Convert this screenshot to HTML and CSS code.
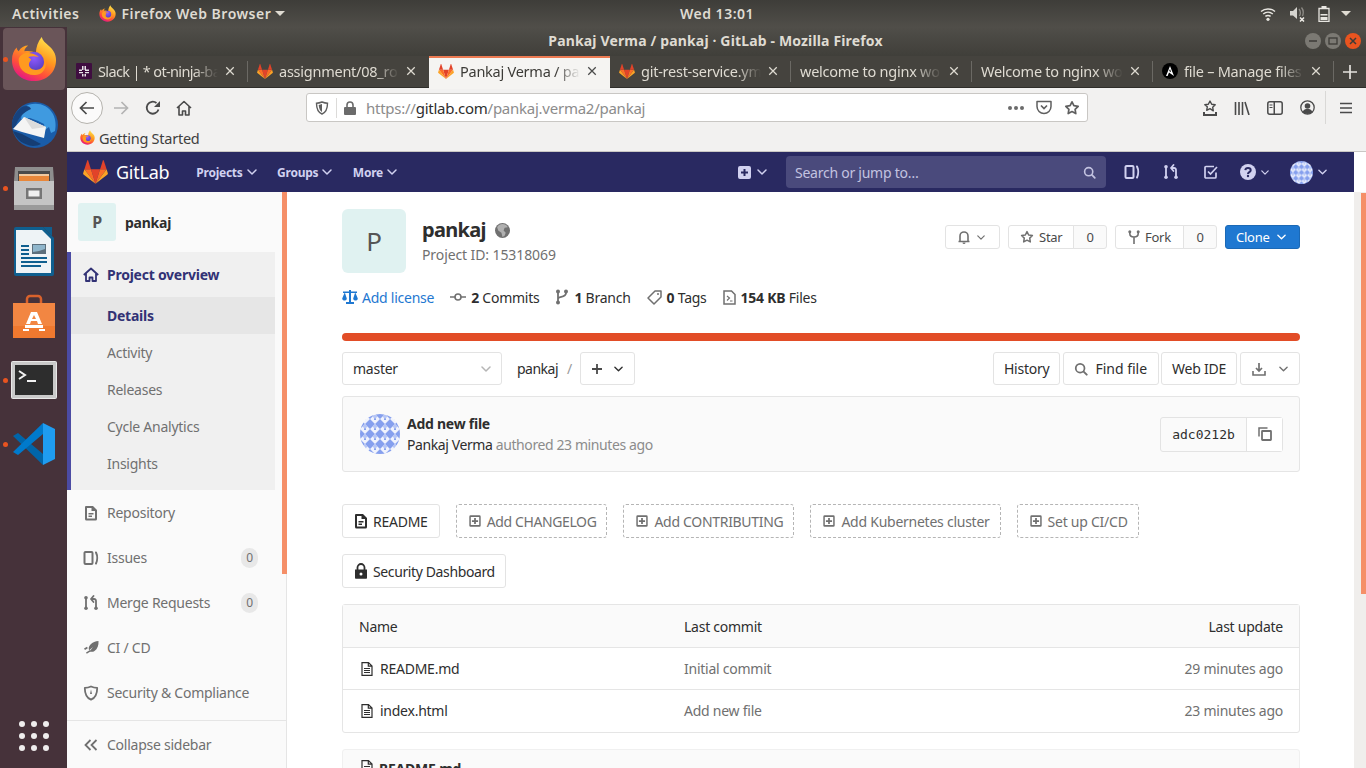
FILE: index.html
```html
<!DOCTYPE html>
<html lang="en">
<head>
  <meta charset="utf-8">
  <title>Pankaj Verma / pankaj - GitLab</title>
  <link rel="stylesheet" href="styles.css">
</head>
<body>

<!-- shared icons -->
<svg class="defs" width="0" height="0" aria-hidden="true">
  <defs>
    <symbol id="tanuki" viewBox="0 0 36 34">
      <path fill="#e24329" d="M18 34 24.6 13 11.4 13Z"/>
      <path fill="#fc6d26" d="M18 34 11.4 13 2 13Z"/>
      <path fill="#fca326" d="M2 13 .2 18.900c-.2.600 0 1.200.5 1.600L18 34Z"/>
      <path fill="#e24329" d="M2 13H11.400L7.400.6c-.2-.6-1.100-.6-1.300 0Z"/>
      <path fill="#fc6d26" d="M18 34 24.600 13 34 13Z"/>
      <path fill="#fca326" d="M34 13 35.800 18.900c.2.600 0 1.200-.5 1.600L18 34Z"/>
      <path fill="#e24329" d="M34 13H24.600L28.600.6c.2-.6 1.100-.6 1.300 0Z"/>
    </symbol>
    <linearGradient id="fxBody" x1="0.8" y1="0.05" x2="0.3" y2="1">
      <stop offset="0" stop-color="#ffe14d"/>
      <stop offset="0.4" stop-color="#ff9a1f"/>
      <stop offset="0.72" stop-color="#ff4f3a"/>
      <stop offset="1" stop-color="#e31587"/>
    </linearGradient>
    <radialGradient id="fxGlobe" cx="0.5" cy="0.3" r="0.8">
      <stop offset="0" stop-color="#9059ff"/>
      <stop offset="1" stop-color="#4b3bb5"/>
    </radialGradient>
    <symbol id="firefox" viewBox="0 0 48 48">
      <path fill="url(#fxBody)" d="M32 1c1 4 4 6 7 9 5 4 8 9 8 15 0 13-10 22-23 22C11 47 1 38 1 25c0-6 2-10 5-13 0 2 1 3 2 4 2-4 6-6 10-6-3 2-4 4-4 6 4-1 9 0 12 2 0-6 2-12 6-17Z"/>
      <circle cx="24" cy="27" r="10.500" fill="url(#fxGlobe)"/>
      <path fill="#ff9a1f" d="M8 24c2-5 7-7 12-6 4 .5 7 2 9 4-4-1-8-1-11 0 1 1 3 2 3 3-3 3-3 6 0 9 3 2 7 2 10 0 3-2 5-6 4-10 3 5 1 12-4 15-6 3-14 2-19-3-3-3-4-7-4-12Z"/>
    </symbol>
    <symbol id="chev" viewBox="0 0 10 6">
      <path fill="none" stroke="currentColor" stroke-width="1.500" stroke-linecap="round" stroke-linejoin="round" d="M1 1l4 4 4-4"/>
    </symbol>
    <symbol id="i-close" viewBox="0 0 12 12">
      <path fill="none" stroke="currentColor" stroke-width="1.500" d="M1.500 1.500l9 9M10.500 1.500l-9 9"/>
    </symbol>
    <symbol id="i-doc" viewBox="0 0 16 16">
      <path fill="currentColor" fill-rule="evenodd" d="M3 1h7l4 4v9a1.500 1.500 0 0 1-1.500 1.500h-9A1.500 1.500 0 0 1 2 14V2a1 1 0 0 1 1-1Zm1 2v10.500h8V6H8.500V3ZM5.500 8h5v1.500h-5Zm0 2.500h3.500V12H5.500Z"/>
    </symbol>
    <symbol id="i-file" viewBox="0 0 16 16">
      <path fill="none" stroke="currentColor" stroke-width="1.200" d="M3 1.600h6.500L13 5v9.400H3ZM9.300 1.800V5.200H13"/>
      <path fill="none" stroke="currentColor" stroke-width="1.100" d="M5 7.500h6M5 9.500h6M5 11.500h6"/>
    </symbol>
    <symbol id="i-issues" viewBox="0 0 16 16">
      <path fill="none" stroke="currentColor" stroke-width="2" d="M2.500 2h6a1 1 0 0 1 1 1v10a1 1 0 0 1-1 1h-6a1 1 0 0 1-1-1V3a1 1 0 0 1 1-1Z"/>
      <path fill="none" stroke="currentColor" stroke-width="2" stroke-linecap="round" d="M13 2.500c1.500 3 1.500 8 0 11"/>
    </symbol>
    <symbol id="i-mr" viewBox="0 0 16 16">
      <g fill="none" stroke="currentColor" stroke-width="1.800" stroke-linecap="round" stroke-linejoin="round">
        <path d="M3 4v8M13 13V6c0-1-.5-2-2-2H9"/><path d="M10.500 1 8 4l2.500 3"/>
      </g>
      <circle cx="3" cy="2.700" r="1.800" fill="currentColor"/><circle cx="3" cy="13.300" r="1.800" fill="currentColor"/><circle cx="13" cy="13.300" r="1.800" fill="currentColor"/>
    </symbol>
    <symbol id="i-plus-box" viewBox="0 0 16 16">
      <path fill="currentColor" fill-rule="evenodd" d="M3 1.500h10A1.500 1.500 0 0 1 14.500 3v10a1.500 1.500 0 0 1-1.500 1.500H3A1.500 1.500 0 0 1 1.500 13V3A1.500 1.500 0 0 1 3 1.500Zm.2 1.800v9.400h9.600V3.300ZM7 4.500h2V7h2.500v2H9v2.500H7V9H4.500V7H7Z"/>
    </symbol>
    <symbol id="i-search" viewBox="0 0 16 16">
      <circle cx="7" cy="7" r="5" fill="none" stroke="currentColor" stroke-width="2"/>
      <path stroke="currentColor" stroke-width="2.200" stroke-linecap="round" d="M11 11l3.500 3.500"/>
    </symbol>
    <symbol id="i-star" viewBox="0 0 16 16">
      <path fill="none" stroke="currentColor" stroke-width="1.700" stroke-linejoin="round" d="M8 1.800l1.900 3.900 4.300.6-3.100 3 .7 4.300L8 11.600l-3.800 2 .7-4.300-3.100-3 4.300-.6Z"/>
    </symbol>
    <symbol id="identicon" viewBox="0 0 40 40">
      <defs>
        <pattern id="triPat" width="10" height="10" patternUnits="userSpaceOnUse">
          <rect width="10" height="10" fill="#f0f3fd"/>
          <path fill="#86a0ee" d="M0 0h5L0 5ZM10 0v5L5 0ZM5 10l5-5v5ZM0 10V5l5 5ZM4 4h2v2H4Z"/>
          <path fill="#b6c6f5" d="M5 0l2.500 2.500L5 5 2.500 2.500Z"/>
        </pattern>
      </defs>
      <circle cx="20" cy="20" r="20" fill="url(#triPat)"/>
    </symbol>
  </defs>
</svg>

<header class="topbar">
  <div class="topbar-left">
    <span class="activities">Activities</span>
    <span class="app-menu">
      <svg width="17" height="17"><use href="#firefox"/></svg>
      Firefox Web Browser
      <i class="caret"></i>
    </span>
  </div>
  <div class="clock">Wed 13:01</div>
  <div class="topbar-right">
    <svg width="16" height="14" viewBox="0 0 16 14"><g fill="none" stroke="#e8e6e1" stroke-width="1.500"><path d="M1 4.500c4-3.500 10-3.500 14 0"/><path d="M3.200 7c2.800-2.300 6.800-2.300 9.600 0"/><path d="M5.400 9.400c1.500-1.100 3.700-1.100 5.200 0" /></g><circle cx="8" cy="12.300" r="1.600" fill="#e8e6e1"/></svg>
    <svg width="16" height="16" viewBox="0 0 16 16"><path fill="#d5d3ce" d="M1 5h3l4-4v12L4 9.500H1Z"/><path fill="none" stroke="#8d8b86" stroke-width="1.300" d="M10 3c1.500 1.800 1.500 5 .5 7M12.500 1.500c2 2.500 2 6 1 8.500"/><path stroke="#f0eee9" stroke-width="1.500" d="M11 11.500l4 4M15 11.500l-4 4"/></svg>
    <svg width="12" height="16" viewBox="0 0 12 16"><path fill="none" stroke="#e8e6e1" stroke-width="1.300" d="M1 2.500h10v13H1Z"/><path fill="#e8e6e1" d="M3.500 0h5v2h-5ZM2.500 8h7v1.500h-7Zm0 3h7v3h-7Z"/></svg>
    <i class="caret"></i>
  </div>
</header>

<div class="workspace">
  <aside class="dock">
    <div class="dock-item is-active has-dot">
      <svg width="46" height="46"><use href="#firefox"/></svg>
    </div>
    <div class="dock-item">
      <svg width="48" height="48" viewBox="0 0 48 48">
        <circle cx="25" cy="25" r="23" fill="#1a5ca8"/>
        <path fill="#3f9ae0" d="M13 8c8-7 24-6 30 6 3 6 3 12 2 17l-4 2-2-6-4 3-1-6-6-3-8-3-9 1Z"/>
        <path fill="#17427d" d="M2 28c-1-8 3-16 10-21 4-2 8-1 9 2-7 3-13 8-16 19Z"/>
        <path fill="#f4f4f4" d="M3 29 14 17l22 10-2 11-22-6Z"/>
        <path fill="#dcdcdc" d="M14 17l22 10-14 2Z"/>
        <path fill="#153d73" d="M3 31c3 8 10 14 20 15 3 0 6-1 8-2l-19-10Z"/>
      </svg>
    </div>
    <div class="dock-item has-dot">
      <svg width="42" height="44" viewBox="0 0 42 44">
        <path fill="#8e8e8e" d="M2 1h38l1 14H1Z"/>
        <path fill="#4a4a4a" d="M5 5h32v11H5Z"/>
        <path fill="#f0c9a0" d="M6 8h30v2H6Z"/>
        <path fill="#e8873a" d="M6 10h30v6H6Z"/>
        <path fill="#c4c4c4" d="M1 15h40v29H1Z"/>
        <path fill="#9a9a9a" d="M1 39h40v5H1Z"/>
        <path fill="#767676" d="M13 22h16v11H13Z"/>
        <path fill="#f0f0f0" d="M15.500 24.500h11v6h-11Z"/>
      </svg>
    </div>
    <div class="dock-item">
      <svg width="42" height="50" viewBox="0 0 42 50">
        <path fill="#0f5f8f" d="M1 2a2 2 0 0 1 2-2h27l11 11v36a2 2 0 0 1-2 2H3a2 2 0 0 1-2-2Z"/>
        <path fill="#eef3f6" d="M3 3h26l9 9v34H3Z"/>
        <path fill="#0f5f8f" d="M30 0h9v9ZM8 18h8v2H8Zm0 4h8v2H8Zm0 4h8v2H8Zm0 4h26v2H8Zm0 4h26v2H8Zm0 4h20v2H8Z"/>
        <path fill="#5c6f7c" d="M19 17h14v10H19Z"/>
        <path fill="#8fb6cc" d="M20 18h12v4l-6 2-6 1Z"/>
      </svg>
    </div>
    <div class="dock-item">
      <svg width="42" height="44" viewBox="0 0 42 44">
        <path fill="none" stroke="#d9622c" stroke-width="2.500" d="M14 10V5a3 3 0 0 1 3-3h8a3 3 0 0 1 3 3v5"/>
        <path fill="#f0792f" d="M0 9h42v35H0Z"/>
        <path fill="#f7a066" d="M0 9h42v23H0Z" opacity=".35"/>
        <path fill="#fff" fill-rule="evenodd" d="M18 18h6l5 12h-4l-1-3h-6l-1 3h-4Zm3 3-2 4h4Z"/>
        <path fill="#fff" d="M12 31h18v3H12Z"/>
        <path fill="#fff" d="M10 35h6v2h-6Zm16 0h6v2h-6Z"/>
      </svg>
    </div>
    <div class="dock-item has-dot">
      <svg width="46" height="38" viewBox="0 0 46 38">
        <rect x=".5" y=".5" width="45" height="37" rx="1" fill="#c9c9c9" stroke="#e8e8e8"/>
        <rect x="4" y="4" width="38" height="30" fill="#2d2d2d"/>
        <path fill="none" stroke="#f2f2f2" stroke-width="2" d="M8 10l6 4-6 4"/>
        <path fill="#f2f2f2" d="M16 19h9v2h-9Z"/>
      </svg>
    </div>
    <div class="dock-item has-dot">
      <svg width="44" height="44" viewBox="0 0 44 44">
        <path fill="#0065a9" d="M31 43V32L6 11 1 14Z"/>
        <path fill="#007acc" d="M31 1V12L6 33 1 30Z"/>
        <path fill="#1f9cf0" d="M31 1l12 6v30l-12 6Z"/>
      </svg>
    </div>
    <div class="dock-grid"><i></i><i></i><i></i><i></i><i></i><i></i><i></i><i></i><i></i></div>
  </aside>

  <div class="window">
    <div class="titlebar">
      <span class="title-text">Pankaj Verma / pankaj · GitLab - Mozilla Firefox</span>
      <div class="win-buttons">
        <span class="win-btn"><svg width="16" height="16" viewBox="0 0 16 16"><path stroke="#3c3b37" stroke-width="1.500" d="M4 8h8"/></svg></span>
        <span class="win-btn"><svg width="16" height="16" viewBox="0 0 16 16"><rect x="4" y="5" width="8" height="6" fill="none" stroke="#3c3b37" stroke-width="1.300"/></svg></span>
        <span class="win-btn win-close"><svg width="16" height="16" viewBox="0 0 16 16"><path stroke="#3c3b37" stroke-width="1.500" d="M5 5l6 6M11 5l-6 6"/></svg></span>
      </div>
    </div>

    <div class="tabstrip">
      <div class="tab tab-tight">
        <svg width="16" height="16" viewBox="0 0 16 16"><rect width="16" height="16" rx="1" fill="#3f0e40"/><path fill="#e8e4e8" d="M6 3h1.500v4H6Zm2.500 0H10v4H8.500ZM3 6.500h3V8H3ZM3 9h4v1.300H3Zm6-2.500h4V8H9ZM9 9h4v1.300H9Zm-3 2h1.500v2.500H6Zm2.500 0H10v2.500H8.500Z"/></svg>
        <span class="tab-label">Slack | * ot-ninja-ba</span>
        <svg class="tab-x" width="10" height="10"><use href="#i-close"/></svg>
      </div>
      <div class="tab tab-nosep">
        <svg width="16" height="15"><use href="#tanuki"/></svg>
        <span class="tab-label">assignment/08_ro</span>
        <svg class="tab-x" width="10" height="10"><use href="#i-close"/></svg>
      </div>
      <div class="tab tab-active tab-nosep">
        <svg width="16" height="15"><use href="#tanuki"/></svg>
        <span class="tab-label">Pankaj Verma / pa</span>
        <svg class="tab-x" width="10" height="10"><use href="#i-close"/></svg>
      </div>
      <div class="tab">
        <svg width="16" height="15"><use href="#tanuki"/></svg>
        <span class="tab-label">git-rest-service.ym</span>
        <svg class="tab-x" width="10" height="10"><use href="#i-close"/></svg>
      </div>
      <div class="tab">
        <span class="tab-label">welcome to nginx wo</span>
        <svg class="tab-x" width="10" height="10"><use href="#i-close"/></svg>
      </div>
      <div class="tab">
        <span class="tab-label">Welcome to nginx wo</span>
        <svg class="tab-x" width="10" height="10"><use href="#i-close"/></svg>
      </div>
      <div class="tab">
        <svg width="16" height="16" viewBox="0 0 16 16"><circle cx="8" cy="8" r="8" fill="#000"/><path fill="#fff" d="M8 3l4 10-5-3.500L5.600 13H4Zm0 3L7.200 8l1.900 1.300Z"/></svg>
        <span class="tab-label">file – Manage files</span>
        <svg class="tab-x" width="10" height="10"><use href="#i-close"/></svg>
      </div>
      <svg class="tab-new" width="14" height="14" viewBox="0 0 14 14"><path stroke="#e4e2dd" stroke-width="1.700" d="M7 0v14M0 7h14"/></svg>
    </div>

    <div class="toolbar">
      <span class="back-btn"><svg width="16" height="14" viewBox="0 0 16 14"><path fill="none" stroke="#4a4a4a" stroke-width="1.700" d="M15 7H2M7.500 1 1.500 7l6 6"/></svg></span>
      <svg class="tool-fwd" width="16" height="14" viewBox="0 0 16 14"><path fill="none" stroke="#b3b3b3" stroke-width="1.700" d="M1 7h13M8.500 1l6 6-6 6"/></svg>
      <svg class="tool-reload" width="16" height="16" viewBox="0 0 16 16"><path fill="none" stroke="#4a4a4a" stroke-width="1.800" d="M13.500 9.500A6 6 0 1 1 11.500 3"/><path fill="#4a4a4a" d="M15 1v6H9Z"/></svg>
      <svg class="tool-home" width="16" height="16" viewBox="0 0 16 16"><path fill="none" stroke="#4a4a4a" stroke-width="1.600" stroke-linejoin="round" d="M1 8l7-6.500L15 8M3 6.500V15h3.500v-4h3v4H13V6.500"/></svg>

      <div class="urlbar">
        <svg width="14" height="14" viewBox="0 0 14 14"><path fill="none" stroke="#5f5f5f" stroke-width="1.400" d="M7 1c2 .8 3.800 1.200 5.500 1.200C12.500 8 10.500 11.500 7 13 3.500 11.500 1.500 8 1.500 2.200 3.200 2.200 5 1.800 7 1Z"/><path fill="#5f5f5f" d="M7 3v8c-2-1-3-3.500-3.300-7Z"/></svg>
        <i class="url-sep"></i>
        <svg width="12" height="14" viewBox="0 0 12 14"><path fill="none" stroke="#6b6b6b" stroke-width="1.600" d="M3 6.500V4a3 3 0 0 1 6 0v2.500"/><rect y="6" width="12" height="8" rx="1" fill="#6b6b6b"/></svg>
        <span class="url-text"><span class="url-dim">https://</span>gitlab.com<span class="url-dim">/pankaj.verma2/pankaj</span></span>
        <span class="url-dots"><i></i><i></i><i></i></span>
        <svg width="16" height="15" viewBox="0 0 16 15"><path fill="none" stroke="#5f5f5f" stroke-width="1.500" stroke-linejoin="round" d="M1 1.500h14v5a7 7 0 0 1-14 0Z"/><path fill="none" stroke="#5f5f5f" stroke-width="1.700" d="M5 5.500l3 3 3-3"/></svg>
        <svg class="url-star" width="16" height="16"><use href="#i-star"/></svg>
      </div>

      <div class="tool-right">
        <svg width="14" height="16" viewBox="0 0 14 16"><path fill="none" stroke="#4a4a4a" stroke-width="1.400" stroke-linejoin="round" d="M7 1l1.700 3.300 3.500.5-2.500 2.500.6 3.500L7 8.700l-3.300 1.600.6-3.500L1.800 4.800l3.500-.5Z"/><path fill="#4a4a4a" d="M0 12h2v2h10v-2h2v4H0Z"/></svg>
        <svg width="16" height="14" viewBox="0 0 16 14"><path stroke="#4a4a4a" stroke-width="1.600" fill="none" d="M1.500 1v13M5 1v13M8.500 1v13M11 1l4 13"/></svg>
        <svg width="16" height="14" viewBox="0 0 16 14"><rect x=".8" y=".8" width="14.400" height="12.400" rx="2" fill="none" stroke="#4a4a4a" stroke-width="1.500"/><path fill="#4a4a4a" d="M6.500 1h1.500v12H6.500ZM2.500 3.500h3v1h-3Zm0 2.500h3v1h-3Z"/></svg>
        <svg width="15" height="15" viewBox="0 0 15 15"><circle cx="7.500" cy="7.500" r="6.700" fill="none" stroke="#4a4a4a" stroke-width="1.300"/><circle cx="7.500" cy="6" r="2.800" fill="#4a4a4a"/><path fill="#4a4a4a" d="M2.500 12c1-2.500 3-3 5-3s4 .5 5 3c-3 2.500-7 2.500-10 0Z"/></svg>
        <i class="tool-sep"></i>
        <svg width="12" height="12" viewBox="0 0 12 12"><path stroke="#4a4a4a" stroke-width="1.700" d="M0 1.500h12M0 6h12M0 10.500h12"/></svg>
      </div>
    </div>

    <div class="bookmarks">
      <svg width="15" height="15"><use href="#firefox"/></svg>
      <span>Getting Started</span>
    </div>

    <div class="browser-view">
      <div class="page">
        <nav class="gl-nav">
          <svg class="gl-logo" width="25" height="24"><use href="#tanuki"/></svg>
          <span class="gl-brand">GitLab</span>
          <span class="gl-link gl-first">Projects <svg width="10" height="6"><use href="#chev"/></svg></span>
          <span class="gl-link">Groups <svg width="10" height="6"><use href="#chev"/></svg></span>
          <span class="gl-link">More <svg width="10" height="6"><use href="#chev"/></svg></span>
          <span class="gl-plus">
            <svg width="13" height="13" viewBox="0 0 13 13"><path fill="#d1d1f0" fill-rule="evenodd" d="M2 0h9a2 2 0 0 1 2 2v9a2 2 0 0 1-2 2H2a2 2 0 0 1-2-2V2a2 2 0 0 1 2-2Zm3.500 3v2.500H3v2h2.500V10h2V7.500H10v-2H7.500V3Z"/></svg>
            <svg width="10" height="6"><use href="#chev"/></svg>
          </span>
          <div class="gl-search">
            <span>Search or jump to…</span>
            <svg width="13" height="13"><use href="#i-search"/></svg>
          </div>
          <svg class="gl-ic-issues" width="16" height="16"><use href="#i-issues"/></svg>
          <svg class="gl-ic-mr" width="16" height="16"><use href="#i-mr"/></svg>
          <svg class="gl-ic-todo" width="14" height="14" viewBox="0 0 14 14"><path fill="none" stroke="#d1d1f0" stroke-width="1.700" d="M12 7.500V12a1 1 0 0 1-1 1H2a1 1 0 0 1-1-1V2.500a1 1 0 0 1 1-1h8"/><path fill="none" stroke="#d1d1f0" stroke-width="1.700" d="M4 6.500l2.500 2.500L13 2"/></svg>
          <span class="gl-help">
            <svg width="16" height="16" viewBox="0 0 16 16"><circle cx="8" cy="8" r="8" fill="#d1d1f0"/><path fill="none" stroke="#292961" stroke-width="2" d="M5.300 6.200C5.500 4.600 6.600 4 8 4c1.600 0 2.700.9 2.700 2.200 0 2-2.700 1.900-2.700 3.700"/><circle cx="8" cy="12" r="1.200" fill="#292961"/></svg>
            <svg width="8" height="5"><use href="#chev"/></svg>
          </span>
          <span class="gl-user">
            <svg width="23" height="23"><use href="#identicon"/></svg>
            <svg width="9" height="6"><use href="#chev"/></svg>
          </span>
        </nav>

        <div class="gl-body">
          <aside class="sidebar">
            <div class="ctx-header">
              <span class="ctx-avatar">P</span>
              <span class="ctx-name">pankaj</span>
            </div>
            <div class="menu-group">
              <div class="menu-head">
                <svg width="16" height="16" viewBox="0 0 16 16"><path fill="none" stroke="currentColor" stroke-width="1.800" stroke-linejoin="round" d="M.8 8 8 1.500 15.200 8M3 6.500V14h3.500v-3.500h3V14H13V6.500"/></svg>
                Project overview
              </div>
              <div class="menu-sub is-current">Details</div>
              <div class="menu-sub">Activity</div>
              <div class="menu-sub">Releases</div>
              <div class="menu-sub">Cycle Analytics</div>
              <div class="menu-sub">Insights</div>
            </div>
            <div class="menu-item">
              <svg width="16" height="16"><use href="#i-doc"/></svg>Repository
            </div>
            <div class="menu-item">
              <svg width="16" height="16"><use href="#i-issues"/></svg>Issues<span class="count">0</span>
            </div>
            <div class="menu-item">
              <svg width="16" height="16"><use href="#i-mr"/></svg>Merge Requests<span class="count">0</span>
            </div>
            <div class="menu-item">
              <svg width="16" height="16" viewBox="0 0 16 16"><path fill="currentColor" d="M15.500 1c.3 4-1 8-4 10-1.800 1.200-3.500 1-4.800.2L10 7 6.200 10.300C5.300 8.800 5.600 6.500 7.500 4.500 9.500 2.500 12.500 1 15.500 1Z"/><path fill="currentColor" d="M1 8.500 4 6.800l.8 1.400L2 10Zm2 4 4-2.500.8 1.300-4 2.500Z"/></svg>CI / CD
            </div>
            <div class="menu-item">
              <svg width="16" height="16" viewBox="0 0 16 16"><path fill="none" stroke="currentColor" stroke-width="1.800" stroke-linejoin="round" d="M8 1.500c2 1 4 1.400 6.200 1.400C14.200 9 12 13 8 14.700 4 13 1.800 9 1.800 2.900 4 2.900 6 2.500 8 1.500Z"/><path fill="currentColor" d="M8 4.500 9 9H7Z"/></svg>Security &amp; Compliance
            </div>
            <div class="collapse-row">
              <svg width="14" height="12" viewBox="0 0 14 12"><path fill="none" stroke="currentColor" stroke-width="1.800" d="M6.500 1 1.500 6l5 5M12.500 1l-5 5 5 5"/></svg>
              Collapse sidebar
            </div>
            <i class="side-thumb"></i>
          </aside>

          <main class="content">
            <section class="proj-head">
              <div class="proj-avatar">P</div>
              <div class="proj-info">
                <h1 class="proj-title">pankaj
                  <svg width="15" height="15" viewBox="0 0 14 14"><circle cx="7" cy="7" r="7" fill="#707070"/><path fill="#fff" d="M7 1c2 0 4 1 5 3l-3 .5L8 7l2 2-1 3-2 1-1-4-3-2-1-3c1-2 3-3 5-3Z" opacity=".45"/></svg>
                </h1>
                <div class="proj-id">Project ID: 15318069</div>
              </div>
              <div class="proj-actions">
                <span class="btn-sm bell">
                  <svg width="14" height="14" viewBox="0 0 14 14"><path fill="none" stroke="#707070" stroke-width="1.600" d="M1.500 11.500h11M3 11.500V6a4 4 0 0 1 8 0v5.500"/><path fill="#707070" d="M5.500 12.500h3a1.500 1.500 0 0 1-3 0Z"/></svg>
                  <svg width="8" height="5"><use href="#chev"/></svg>
                </span>
                <span class="btn-group">
                  <span class="btn-sm btn-star">
                    <svg width="14" height="14"><use href="#i-star"/></svg>Star
                  </span><span class="btn-count">0</span>
                </span>
                <span class="btn-group">
                  <span class="btn-sm btn-fork">
                    <svg width="12" height="14" viewBox="0 0 12 14"><g fill="none" stroke="#707070" stroke-width="1.600"><path d="M6 7v7M1.800 2v1.500C1.800 6 4 7 6 7s4.200-1 4.200-3.500V2"/></g><circle cx="1.800" cy="1.800" r="1.500" fill="#707070"/><circle cx="10.200" cy="1.800" r="1.500" fill="#707070"/></svg>Fork
                  </span><span class="btn-count">0</span>
                </span>
                <span class="btn-clone">Clone <svg width="9" height="6"><use href="#chev"/></svg></span>
              </div>
            </section>

            <section class="proj-stats">
              <span class="stat stat-link">
                <svg width="16" height="14" viewBox="0 0 16 14"><path fill="#1f78d1" d="M7 0h2v1.500h6V3H13.500l2.300 5.500c0 1.500-1.300 2-2.300 2s-2.300-.5-2.300-2L13 3H9v9h3v2H4v-2h3V3H3l1.800 5.500c0 1.500-1.300 2-2.300 2s-2.300-.5-2.300-2L2.500 3H1V1.500h6Z"/></svg>
                Add license
              </span>
              <span class="stat">
                <svg width="16" height="10" viewBox="0 0 16 10"><circle cx="8" cy="5" r="3" fill="none" stroke="#707070" stroke-width="1.600"/><path stroke="#707070" stroke-width="1.600" d="M0 5h5M11 5h5"/></svg>
                <span><b>2</b> Commits</span>
              </span>
              <span class="stat">
                <svg width="14" height="16" viewBox="0 0 14 16"><g fill="none" stroke="#707070" stroke-width="1.800"><path d="M3 2v12M3 10c0-3 8-1 8-6"/></g><circle cx="3" cy="2.500" r="2" fill="#707070"/><circle cx="3" cy="13.500" r="2" fill="#707070"/><circle cx="11" cy="2.500" r="2" fill="#707070"/></svg>
                <span><b>1</b> Branch</span>
              </span>
              <span class="stat">
                <svg width="15" height="15" viewBox="0 0 15 15"><path fill="none" stroke="#707070" stroke-width="1.500" stroke-linejoin="round" d="M14 1v6l-7 7-6-6 7-7Z"/><circle cx="11" cy="4" r="1" fill="#707070"/></svg>
                <span><b>0</b> Tags</span>
              </span>
              <span class="stat">
                <svg width="13" height="15" viewBox="0 0 13 15"><path fill="none" stroke="#707070" stroke-width="1.500" d="M1 1h7.500L12 4.500V14H1Z"/><path fill="none" stroke="#707070" stroke-width="1.200" d="M4 6l2.500 2L4 10.500M7 11h2.500"/></svg>
                <span><b>154 KB</b> Files</span>
              </span>
            </section>

            <div class="lang-bar"></div>

            <section class="ref-row">
              <span class="branch-select">master <svg width="10" height="6"><use href="#chev"/></svg></span>
              <span class="crumb">pankaj</span>
              <span class="crumb-sep">/</span>
              <span class="btn plus-drop">
                <svg width="10" height="10" viewBox="0 0 10 10"><path stroke="#4a4a4a" stroke-width="1.800" d="M5 0v10M0 5h10"/></svg>
                <svg width="9" height="6"><use href="#chev"/></svg>
              </span>
              <span class="ref-spacer"></span>
              <span class="btn">History</span>
              <span class="btn btn-find"><svg class="muted" width="14" height="14"><use href="#i-search"/></svg>Find file</span>
              <span class="btn">Web IDE</span>
              <span class="btn dl-drop">
                <svg class="muted" width="14" height="14" viewBox="0 0 14 14"><path fill="none" stroke="currentColor" stroke-width="1.600" d="M1 9v4h12V9"/><path fill="none" stroke="currentColor" stroke-width="1.700" d="M7 1v8M4 6l3 3 3-3"/></svg>
                <svg class="muted" width="9" height="6"><use href="#chev"/></svg>
              </span>
            </section>

            <section class="commit-box">
              <svg class="commit-avatar" width="40" height="40"><use href="#identicon"/></svg>
              <div class="commit-text">
                <div class="commit-title">Add new file</div>
                <div class="commit-meta"><span class="commit-author">Pankaj Verma</span> authored 23 minutes ago</div>
              </div>
              <div class="sha-group">
                <span class="sha">adc0212b</span>
                <span class="sha-copy">
                  <svg width="14" height="14" viewBox="0 0 14 14"><path fill="none" stroke="#707070" stroke-width="1.500" d="M9.500 1H1v8.500"/><rect x="4" y="4" width="9" height="9" rx=".5" fill="none" stroke="#707070" stroke-width="1.800"/></svg>
                </span>
              </div>
            </section>

            <section class="quick-links">
              <span class="pill pill-first"><svg width="16" height="16"><use href="#i-doc"/></svg>README</span>
              <span class="pill pill-dashed pill-tight"><svg width="14" height="14"><use href="#i-plus-box"/></svg>Add CHANGELOG</span>
              <span class="pill pill-dashed pill-snug"><svg width="14" height="14"><use href="#i-plus-box"/></svg>Add CONTRIBUTING</span>
              <span class="pill pill-dashed"><svg width="14" height="14"><use href="#i-plus-box"/></svg>Add Kubernetes cluster</span>
              <span class="pill pill-dashed"><svg width="14" height="14"><use href="#i-plus-box"/></svg>Set up CI/CD</span>
              <span class="pill pill-tight"><svg width="16" height="16" viewBox="-1 0 16 16"><path fill="none" stroke="#2e2e2e" stroke-width="1.800" d="M3.500 7V4.500a3.500 3.500 0 0 1 7 0V7"/><path fill="#2e2e2e" fill-rule="evenodd" d="M1 6.500h12V15a.8.8 0 0 1-.8.800H1.800A.8.8 0 0 1 1 15Zm6 3a1.500 1.500 0 1 0 0 3 1.500 1.500 0 0 0 0-3Z"/></svg>Security Dashboard</span>
            </section>

            <table class="tree">
              <thead>
                <tr><th class="col-name">Name</th><th class="col-commit">Last commit</th><th class="col-date">Last update</th></tr>
              </thead>
              <tbody>
                <tr>
                  <td class="col-name"><svg width="16" height="16"><use href="#i-file"/></svg>README.md</td>
                  <td class="col-commit">Initial commit</td>
                  <td class="col-date">29 minutes ago</td>
                </tr>
                <tr class="row-last">
                  <td class="col-name"><svg width="16" height="16"><use href="#i-file"/></svg>index.html</td>
                  <td class="col-commit">Add new file</td>
                  <td class="col-date">23 minutes ago</td>
                </tr>
              </tbody>
            </table>

            <section class="readme-head">
              <svg width="16" height="16"><use href="#i-file"/></svg><b>README.md</b>
            </section>
          </main>
        </div>
      </div>
      <div class="page-scroll"><i class="page-thumb"></i></div>
    </div>
  </div>
</div>

</body>
</html>
```

FILE: styles.css
```css
* {
    box-sizing: border-box;
}

html, body {
    margin: 0;
    height: 768px;
    overflow: hidden;
}

body {
    font-family: "Noto Sans", sans-serif;
    font-size: 14px;
    letter-spacing: -0.25px;
    color: #2e2e2e;
    background: #43323a;
}

svg {
    display: block;
    flex: none;
}

.defs {
    position: absolute;
}

/* ---- gnome top bar ---- */
.topbar {
    height: 27px;
    display: flex;
    align-items: center;
    justify-content: space-between;
    position: relative;
    padding: 0 15px 0 12px;
    background: linear-gradient(#3e3d39, #504e49);
    color: #dfdbd2;
    font-size: 14px;
    font-weight: 600;
    letter-spacing: 0.5px;
}

.topbar-left, .topbar-right, .app-menu {
    display: flex;
    align-items: center;
}

.activities {
    margin-right: 20px;
}

.app-menu {
    gap: 5px;
}

.caret {
    display: block;
    width: 0;
    height: 0;
    border-left: 5px solid transparent;
    border-right: 5px solid transparent;
    border-top: 5px solid #dfdbd2;
}

.app-menu .caret {
    margin-left: -1px;
}

.topbar-right .caret {
    margin-left: -2px;
}

.clock {
    position: absolute;
    left: 0;
    right: 0;
    text-align: center;
    padding-left: 68px;
}

.topbar-right {
    gap: 13px;
}

/* ---- ubuntu dock ---- */
.workspace {
    display: flex;
    height: 741px;
}

.dock {
    width: 67px;
    flex: none;
    display: flex;
    flex-direction: column;
    align-items: center;
    padding-top: 1px;
    background: #46323a;
    position: relative;
}

.dock-item {
    width: 62px;
    height: 64px;
    display: flex;
    align-items: center;
    justify-content: center;
    position: relative;
    border-radius: 4px;
}

.dock-item.is-active {
    height: 62px;
    margin-bottom: 2px;
    background: #6a5559;
}

.dock-item.has-dot::before {
    content: "";
    position: absolute;
    left: 0;
    top: 50%;
    width: 5px;
    height: 5px;
    margin-top: -2px;
    border-radius: 50%;
    background: #e95420;
}

.dock-grid {
    margin-top: auto;
    margin-bottom: 17px;
    display: grid;
    grid-template-columns: repeat(3, 6px);
    gap: 6px;
}

.dock-grid i {
    display: block;
    height: 6px;
    border-radius: 50%;
    background: #efeded;
}

/* ---- firefox chrome ---- */
.window {
    flex: 1;
    min-width: 0;
    display: flex;
    flex-direction: column;
}

.titlebar {
    height: 29px;
    display: flex;
    align-items: center;
    justify-content: center;
    position: relative;
    padding-bottom: 2px;
    background: linear-gradient(#504e49, #403f3a);
    color: #dfdbd2;
    font-size: 14px;
    font-weight: 700;
    letter-spacing: 0.15px;
}

.title-text {
    padding-right: 2px;
}

.win-buttons {
    position: absolute;
    right: 5px;
    top: 6px;
    display: flex;
    gap: 4px;
}

.win-btn {
    width: 16px;
    height: 16px;
    border-radius: 50%;
    background: #7b7973;
}

.win-close {
    background: #e9541f;
}

.tabstrip {
    height: 32px;
    display: flex;
    align-items: flex-start;
    background: #45433e;
    color: #dfdbd2;
    border-bottom: 1px solid #2f2e2a;
}

.tab {
    width: 181px;
    height: 30px;
    flex: none;
    display: flex;
    align-items: center;
    gap: 6px;
    padding: 0 13px 0 9px;
    font-size: 14.500px;
    position: relative;
}

.tab::after {
    content: "";
    position: absolute;
    right: 0;
    top: 5px;
    bottom: 4px;
    width: 1px;
    background: #6b6964;
}

.tab .tab-x {
    margin-left: 1px;
}

.tab-label {
    flex: 1;
    min-width: 0;
    white-space: nowrap;
    overflow: hidden;
    -webkit-mask-image: linear-gradient(to right, #000 80%, transparent);
    mask-image: linear-gradient(to right, #000 80%, transparent);
}

.tab-tight .tab-label {
    letter-spacing: -0.65px;
}

.tab-x {
    color: #dfdbd2;
}

.tab-active {
    height: 33px;
    padding-bottom: 5px;
    background: #f5f4f2;
    color: #3c3b37;
    border-top: 2px solid #ec7a52;
}

.tab-active .tab-x {
    color: #4a4a4a;
}

.tab-nosep::after {
    display: none;
}

.tab-new {
    align-self: center;
    margin-left: 9px;
}

.toolbar {
    height: 39px;
    display: flex;
    align-items: center;
    padding: 0 12px 0 4px;
    background: #f2f1f0;
}

.back-btn {
    width: 32px;
    height: 32px;
    display: flex;
    align-items: center;
    justify-content: center;
    border-radius: 50%;
    border: 1px solid #b5b3ae;
    background: #fbfafa;
}

.tool-fwd {
    margin-left: 10px;
}

.tool-reload {
    margin-left: 16px;
}

.tool-home {
    margin-left: 15px;
}

.urlbar {
    width: 782px;
    height: 29px;
    flex: none;
    margin-left: 114px;
    display: flex;
    align-items: center;
    padding: 0 7px 0 8px;
    background: #fff;
    border: 1px solid #c9c7c4;
    border-radius: 3px;
    color: #5f5f5f;
}

.url-sep {
    width: 1px;
    height: 20px;
    margin: 0 7px 0 7px;
    background: #dcdbd9;
}

.url-text {
    flex: 1;
    margin-left: 10px;
    font-size: 15px;
    color: #2e2e2e;
}

.url-dim {
    color: #8c8c8c;
}

.url-dots {
    display: flex;
    gap: 2px;
    margin-right: 12px;
}

.url-dots i {
    width: 4px;
    height: 4px;
    border-radius: 50%;
    background: #6b6b6b;
}

.url-star {
    margin-left: 12px;
}

.tool-right {
    flex: 1;
    display: flex;
    align-items: center;
    gap: 17px;
    padding-left: 115px;
}

.tool-sep {
    width: 1px;
    height: 33px;
    background: #d9d8d6;
    margin: 0 -3px 0 -7px;
}

.bookmarks {
    height: 25px;
    display: flex;
    align-items: center;
    gap: 4px;
    padding: 0 0 3px 13px;
    background: #f2f1f0;
    border-bottom: 1px solid #c9c7c4;
    font-size: 14.500px;
    color: #3f3f3f;
}

/* ---- page ---- */
.browser-view {
    flex: 1;
    min-height: 0;
    display: flex;
    background: #fff;
}

.page {
    flex: 1;
    min-width: 0;
    display: flex;
    flex-direction: column;
}

.page-scroll {
    width: 12px;
    margin-top: 40px;
    position: relative;
    background: #f0eeec;
}

.page-thumb {
    position: absolute;
    top: 1px;
    right: 0;
    width: 5px;
    height: 401px;
    background: #f58f68;
}

.gl-nav {
    height: 40px;
    flex: none;
    display: flex;
    align-items: center;
    padding-left: 16px;
    background: #292961;
    color: #d1d1f0;
}

.gl-brand {
    margin-left: 8px;
    font-size: 18px;
    color: #fff;
}

.gl-link {
    display: flex;
    align-items: center;
    gap: 4px;
    margin-left: 20.500px;
    font-size: 12px;
    font-weight: 700;
}

.gl-first {
    margin-left: 27px;
}

.gl-plus {
    display: flex;
    align-items: center;
    gap: 6px;
    margin-left: auto;
}

.gl-search {
    width: 320px;
    height: 32px;
    display: flex;
    align-items: center;
    justify-content: space-between;
    margin-left: 19px;
    padding: 0 10px 0 9px;
    border-radius: 4px;
    background: #4a4a7c;
    color: #c3c3e0;
}

.gl-ic-issues {
    margin-left: 18px;
}

.gl-ic-mr {
    margin-left: 23px;
}

.gl-ic-todo {
    margin-left: 25px;
}

.gl-help {
    display: flex;
    align-items: center;
    gap: 5px;
    margin-left: 22px;
}

.gl-user {
    display: flex;
    align-items: center;
    gap: 5px;
    margin: 0 27px 0 21px;
}

.gl-body {
    flex: 1;
    min-height: 0;
    display: flex;
}

/* ---- gitlab sidebar ---- */
.sidebar {
    width: 220px;
    flex: none;
    position: relative;
    display: flex;
    flex-direction: column;
    color: #707070;
    background: #fafafa;
    border-right: 1px solid #e5e5e5;
}

.side-thumb {
    position: absolute;
    top: 0;
    right: -1px;
    width: 5px;
    height: 382px;
    background: #f58f68;
}

.ctx-header {
    height: 60px;
    display: flex;
    align-items: center;
    gap: 9px;
    padding-left: 11px;
}

.ctx-avatar {
    width: 38px;
    height: 38px;
    display: flex;
    align-items: center;
    justify-content: center;
    border-radius: 3px;
    background: #e0f2f1;
    color: #555;
    font-size: 16px;
    font-weight: 700;
}

.ctx-name {
    font-weight: 700;
    color: #2e2e2e;
}

.menu-group {
    width: 208px;
    padding-bottom: 8px;
    background: #f0f0f0;
    border-left: 4px solid #4b4ba3;
}

.menu-head {
    height: 45px;
    display: flex;
    align-items: center;
    gap: 8px;
    padding-left: 12px;
    color: #323275;
    font-weight: 700;
}

.menu-sub {
    height: 37px;
    display: flex;
    align-items: center;
    padding-left: 36px;
}

.menu-sub.is-current {
    background: #e6e6e6;
    color: #323275;
    font-weight: 700;
}

.menu-item {
    width: 208px;
    height: 45px;
    display: flex;
    align-items: center;
    gap: 8px;
    padding: 0 17px 0 16px;
}

.count {
    width: 17px;
    height: 20px;
    margin-left: auto;
    display: flex;
    align-items: center;
    justify-content: center;
    border-radius: 10px;
    background: #e8e8e8;
    font-size: 12px;
}

.collapse-row {
    height: 48px;
    margin-top: 5px;
    display: flex;
    align-items: center;
    gap: 9px;
    padding-left: 17px;
    border-top: 1px solid #e5e5e5;
}

/* ---- main column ---- */
.content {
    flex: 1;
    min-width: 0;
    padding: 17px 54px 0 55px;
    overflow: hidden;
}

.proj-head {
    display: flex;
    height: 64px;
}

.proj-avatar {
    width: 64px;
    height: 64px;
    display: flex;
    align-items: center;
    justify-content: center;
    border-radius: 6px;
    background: #e0f2f1;
    color: #555;
    font-size: 26px;
}

.proj-info {
    margin-left: 16px;
    padding-top: 7px;
}

.proj-title {
    margin: 0;
    display: flex;
    align-items: center;
    gap: 9px;
    font-size: 20px;
    line-height: 28px;
    font-weight: 700;
    letter-spacing: -0.7px;
}

.proj-id {
    margin-top: 1px;
    color: #707070;
    line-height: 20px;
    letter-spacing: -0.1px;
}

.proj-actions {
    margin-left: auto;
    padding-top: 16px;
    display: flex;
    align-items: flex-start;
    gap: 8px;
    font-size: 13px;
}

.btn-sm, .btn-count, .btn-clone {
    height: 24px;
    display: flex;
    align-items: center;
    background: #fff;
    border: 1px solid #e3e3e3;
    border-radius: 3px;
    color: #4a4a4a;
}

.btn-sm {
    gap: 5px;
    padding-left: 11px;
}

.bell {
    width: 55px;
    gap: 6px;
    color: #707070;
}

.btn-star {
    width: 66px;
}

.btn-fork {
    width: 69px;
    padding-left: 12px;
}

.btn-group {
    display: flex;
}

.btn-group .btn-sm {
    border-radius: 3px 0 0 3px;
    color: #4a4a4a;
}

.btn-group .btn-sm svg {
    color: #707070;
}

.btn-count {
    width: 34px;
    justify-content: center;
    margin-left: -1px;
    border-radius: 0 3px 3px 0;
    background: #fafafa;
}

.btn-clone {
    width: 75px;
    gap: 7px;
    padding-left: 10px;
    background: #1f78d1;
    border-color: #1b69b6;
    color: #fff;
}

.proj-stats {
    height: 18px;
    margin-top: 15px;
    display: flex;
    gap: 16px;
}

.stat {
    display: flex;
    align-items: center;
    gap: 5px;
}

.stat-link {
    color: #1f78d1;
    gap: 4px;
}

.lang-bar {
    height: 8px;
    margin-top: 27px;
    border-radius: 4px;
    background: #e24d27;
}

.ref-row {
    margin-top: 11px;
    display: flex;
    align-items: center;
    gap: 3px;
}

.branch-select {
    width: 160px;
    height: 33px;
    display: flex;
    align-items: center;
    justify-content: space-between;
    padding: 0 10px;
    border: 1px solid #e3e3e3;
    border-radius: 3px;
    color: #2e2e2e;
}

.branch-select svg {
    color: #b5b5b5;
}

.crumb {
    margin-left: 12px;
    letter-spacing: -0.5px;
}

.crumb-sep {
    margin: 0 5px 0 6px;
    color: #9a9a9a;
}

.btn {
    height: 33px;
    display: flex;
    align-items: center;
    gap: 7px;
    padding: 0 10px;
    border: 1px solid #e3e3e3;
    border-radius: 3px;
    background: #fff;
}

.plus-drop {
    gap: 12px;
    padding: 0 11px;
}

.btn-find {
    padding-right: 11px;
    margin-right: -1px;
    letter-spacing: 0;
}

.dl-drop {
    gap: 13px;
    padding: 0 11px;
}

.muted {
    color: #707070;
}

.ref-spacer {
    flex: 1;
}

.commit-box {
    height: 76px;
    margin-top: 11px;
    display: flex;
    align-items: center;
    padding: 0 16px 0 17px;
    border: 1px solid #e5e5e5;
    border-radius: 3px;
    background: #fafafa;
}

.commit-text {
    margin-left: 7px;
    line-height: 21px;
}

.commit-title {
    font-weight: 700;
}

.commit-meta {
    color: #8c8c8c;
    letter-spacing: -0.4px;
}

.commit-author {
    color: #2e2e2e;
}

.sha-group {
    margin-left: auto;
    display: flex;
    height: 35px;
    border: 1px solid #e3e3e3;
    border-radius: 3px;
}

.sha {
    width: 85px;
    display: flex;
    align-items: center;
    justify-content: center;
    font-family: "DejaVu Sans Mono", monospace;
    font-size: 13px;
    letter-spacing: 0;
}

.sha-copy {
    width: 36px;
    display: flex;
    align-items: center;
    justify-content: center;
    background: #fff;
    border-left: 1px solid #e3e3e3;
}

.quick-links {
    margin-top: 32px;
    display: flex;
    flex-wrap: wrap;
    gap: 16px;
}

.pill {
    height: 34px;
    display: flex;
    align-items: center;
    gap: 4px;
    padding: 0 10px;
    border: 1px solid #e3e3e3;
    border-radius: 3px;
    background: #fff;
}

.pill-first {
    padding-right: 11px;
}

.pill-dashed {
    gap: 5px;
    padding: 0 10px 0 11px;
    border: 1px dashed #b5b5b5;
    color: #707070;
}

.pill-tight {
    letter-spacing: -0.38px;
}

.pill-snug {
    letter-spacing: -0.31px;
}

.tree {
    width: 100%;
    margin-top: 16px;
    border-collapse: separate;
    border-spacing: 0;
    border: 1px solid #e5e5e5;
    border-radius: 3px;
    table-layout: fixed;
}

.tree th {
    height: 42px;
    font-weight: 400;
    text-align: left;
    background: #fafafa;
}

.tree td {
    height: 42px;
    border-top: 1px solid #e5e5e5;
    color: #707070;
}

.tree .row-last td {
    height: 43px;
    padding-bottom: 2px;
}

.tree th:first-child, .tree td:first-child {
    padding-left: 16px;
}

.tree td.col-name {
    color: #2e2e2e;
    display: flex;
    align-items: center;
    gap: 5px;
}

.tree .col-name {
    width: 340px;
}

.tree .col-commit {
    width: 335px;
}

.tree .col-date {
    text-align: right;
    padding-right: 16px;
}

.readme-head {
    height: 40px;
    margin-top: 16px;
    display: flex;
    gap: 4px;
    padding: 9px 16px;
    border: 1px solid #f0f0f0;
    border-radius: 3px;
    background: #fafafa;
}
```
